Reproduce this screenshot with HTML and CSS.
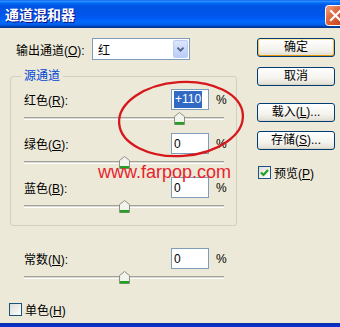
FILE: index.html
```html
<!DOCTYPE html>
<html lang="zh">
<head>
<meta charset="utf-8">
<title>通道混和器</title>
<link rel="stylesheet" href="styles.css">
</head>
<body>
<div class="window">
  <div class="titlebar">
    <span class="title">通道混和器</span>
    <span class="close">
      <svg width="21" height="21" viewBox="0 0 21 21">
        <defs>
          <linearGradient id="cg" x1="0" y1="0" x2="1" y2="1">
            <stop offset="0" stop-color="#f0a488"/>
            <stop offset="0.4" stop-color="#e1683f"/>
            <stop offset="1" stop-color="#c13b16"/>
          </linearGradient>
        </defs>
        <rect x="0.5" y="0.5" width="20" height="20" rx="3" fill="url(#cg)" stroke="#fff"/>
        <path d="M6 6 L15 15 M15 6 L6 15" stroke="#fff" stroke-width="2.2" stroke-linecap="square"/>
      </svg>
    </span>
  </div>
  <div class="client">
    <div class="main">
      <div class="outrow">
        <span class="outlabel">输出通道(<u>O</u>):</span>
        <div class="select">
          <span class="selval">红</span>
          <span class="drop">
            <svg width="15" height="18" viewBox="0 0 15 18"><path d="M4 7.5 L7.5 11 L11 7.5" fill="none" stroke="#4d6185" stroke-width="2"/></svg>
          </span>
        </div>
      </div>
      <fieldset class="group">
        <legend>源通道</legend>
        <div class="chan">
          <div class="head"><span>红色(<u>R</u>):</span><span class="num"><span class="hl">+110</span></span><span class="pct">%</span></div>
          <div class="track"><span class="thumb" style="left:155px"><svg width="11" height="13" viewBox="0 0 11 13"><path d="M0.5 12.5 V4.5 L5.5 0.5 L10.5 4.5 V12.5 Z" fill="#f3f3ee" stroke="#8f8f86"/><rect x="1" y="10" width="9" height="2.5" fill="#21a121"/></svg></span></div>
        </div>
        <div class="chan">
          <div class="head"><span>绿色(<u>G</u>):</span><span class="num">0</span><span class="pct">%</span></div>
          <div class="track"><span class="thumb" style="left:100px"><svg width="11" height="13" viewBox="0 0 11 13"><path d="M0.5 12.5 V4.5 L5.5 0.5 L10.5 4.5 V12.5 Z" fill="#f3f3ee" stroke="#8f8f86"/><rect x="1" y="10" width="9" height="2.5" fill="#21a121"/></svg></span></div>
        </div>
        <div class="chan">
          <div class="head"><span>蓝色(<u>B</u>):</span><span class="num">0</span><span class="pct">%</span></div>
          <div class="track"><span class="thumb" style="left:100px"><svg width="11" height="13" viewBox="0 0 11 13"><path d="M0.5 12.5 V4.5 L5.5 0.5 L10.5 4.5 V12.5 Z" fill="#f3f3ee" stroke="#8f8f86"/><rect x="1" y="10" width="9" height="2.5" fill="#21a121"/></svg></span></div>
        </div>
      </fieldset>
      <div class="chan const">
        <div class="head"><span>常数(<u>N</u>):</span><span class="num">0</span><span class="pct">%</span></div>
        <div class="track"><span class="thumb" style="left:100px"><svg width="11" height="13" viewBox="0 0 11 13"><path d="M0.5 12.5 V4.5 L5.5 0.5 L10.5 4.5 V12.5 Z" fill="#f3f3ee" stroke="#8f8f86"/><rect x="1" y="10" width="9" height="2.5" fill="#21a121"/></svg></span></div>
      </div>
      <div class="check mono"><span class="box"></span><span>单色(<u>H</u>)</span></div>
    </div>
    <div class="side">
      <button class="btn default">确定</button>
      <button class="btn b2">取消</button>
      <button class="btn b3">载入(<u>L</u>)...</button>
      <button class="btn b4">存储(<u>S</u>)...</button>
      <div class="check preview"><span class="box"><svg width="11" height="11" viewBox="0 0 11 11"><path d="M2 5.5 L4.5 8 L9 3" fill="none" stroke="#21a121" stroke-width="2.2"/></svg></span><span>预览(<u>P</u>)</span></div>
    </div>
  </div>
  <div class="bottom"></div>
  <div class="watermark">www.farpop.com</div>
  <svg class="ring" width="340" height="327" viewBox="0 0 340 327">
    <ellipse cx="181" cy="119" rx="62" ry="37" transform="rotate(-4 181 119)" fill="none" stroke="#d8171d" stroke-width="2.3"/>
  </svg>
</div>
</body>
</html>
```

FILE: styles.css
```css
html, body {
  margin: 0;
  padding: 0;
}
body {
  width: 340px;
  height: 327px;
  overflow: hidden;
  background: #ece9d8;
  font-family: "Liberation Sans", "Noto Sans CJK SC", sans-serif;
  font-size: 12px;
  color: #000;
}
.window {
  position: relative;
  height: 327px;
  display: flex;
  flex-direction: column;
}
.titlebar {
  flex: none;
  height: 28px;
  display: flex;
  align-items: center;
  justify-content: space-between;
  padding-left: 5px;
  background: linear-gradient(to bottom,
    #0058ee 0%, #3a93ff 4%, #288eff 6%, #127dff 8%, #036ffc 10%,
    #0262ee 14%, #0057e5 20%, #0054e3 24%, #0055eb 56%, #005bf5 66%,
    #026afe 76%, #0062ef 86%, #0052d6 92%, #0040ab 94%, #003092 100%);
}
.title {
  color: #fff;
  font-family: "Noto Sans CJK SC", sans-serif;
  font-weight: bold;
  font-size: 14px;
  text-shadow: 1px 1px #0f1089;
}
.close {
  display: flex;
  margin-right: -6px;
  margin-top: 2px;
}
.client {
  flex: 1;
  display: flex;
  padding-top: 10px;
}
.main {
  width: 245px;
  flex: none;
}
.outrow {
  display: flex;
  align-items: center;
  height: 22px;
  padding-left: 16px;
}
.outlabel {
  width: 76px;
}
.select {
  width: 98px;
  height: 22px;
  box-sizing: border-box;
  border: 1px solid #7f9db9;
  background: #fff;
  display: flex;
  align-items: center;
  justify-content: space-between;
  padding: 1px 1px 1px 5px;
}
.drop {
  width: 15px;
  height: 18px;
  box-sizing: border-box;
  border: 1px solid #bccbf1;
  border-radius: 2px;
  background: linear-gradient(to bottom, #dbe6fd, #bbcdf7);
  display: flex;
  align-items: center;
  justify-content: center;
}
.drop svg {
  display: block;
}
.group {
  margin: 9px 0 0 10px;
  width: 227px;
  box-sizing: border-box;
  border: 1px solid #d0d0bf;
  border-radius: 3px;
  padding: 6px 0 4px 13px;
}
.group legend {
  color: #0046d5;
  padding: 0 3px;
  margin-left: -3px;
  line-height: 14px;
  font-size: 12px;
}
.chan {
  height: 44px;
}
.head {
  display: grid;
  grid-template-columns: 147px 38px auto;
  align-items: center;
  height: 21px;
}
.num {
  height: 21px;
  box-sizing: border-box;
  border: 1px solid #7f9db9;
  background: #fff;
  display: flex;
  align-items: center;
  padding-left: 2px;
  font-size: 12px;
}
.hl {
  background: #316ac5;
  color: #fff;
  padding: 1px 1px;
  line-height: 15px;
}
.pct {
  padding-left: 7px;
}
.track {
  position: relative;
  width: 200px;
  height: 3px;
  margin-top: 7px;
  box-sizing: border-box;
  border-top: 1px solid #a3a29c;
  border-bottom: 1px solid #fff;
  background: #dcdad0;
}
.thumb {
  position: absolute;
  top: -6px;
  margin-left: -5px;
  display: block;
  line-height: 0;
}
.thumb svg {
  display: block;
}
.const {
  margin: 22px 0 0 24px;
}
.check {
  display: flex;
  align-items: center;
  gap: 3px;
}
.box {
  width: 13px;
  height: 13px;
  box-sizing: border-box;
  border: 1px solid #1c5180;
  background: linear-gradient(135deg, #dcdcd7, #fff);
  display: flex;
  align-items: center;
  justify-content: center;
}
.box svg {
  display: block;
}
.mono {
  margin: 9px 0 0 9px;
}
.side {
  width: 78px;
  margin-left: 12px;
  display: flex;
  flex-direction: column;
}
.btn {
  height: 19px;
  padding: 0;
  box-sizing: border-box;
  border: 1px solid #003c74;
  border-radius: 3px;
  background: linear-gradient(to bottom, #fff 0%, #f4f3ee 60%, #e6e3d8 90%, #d6d0c5 100%);
  font-family: "Liberation Sans", "Noto Sans CJK SC", sans-serif;
  font-size: 12px;
  color: #000;
  line-height: 15px;
}
.btn.default {
  box-shadow: inset 0 1px #ffeaa8, inset 0 -1px #e5970c, inset 1px 0 #f7c04a, inset -1px 0 #f7c04a;
}
.b2 {
  margin-top: 10px;
}
.b3 {
  margin-top: 17px;
}
.b4 {
  margin-top: 9px;
}
.preview {
  margin-top: 14px;
  margin-left: 1px;
}
.bottom {
  flex: none;
  height: 4px;
  background: linear-gradient(to bottom, #0b2fa7, #0831d9);
}
.watermark {
  position: absolute;
  left: 98px;
  top: 162px;
  color: #e8232d;
  font-family: "Liberation Sans", sans-serif;
  font-size: 18px;
  line-height: 21px;
}
.ring {
  position: absolute;
  left: 0;
  top: 0;
  pointer-events: none;
}
```
